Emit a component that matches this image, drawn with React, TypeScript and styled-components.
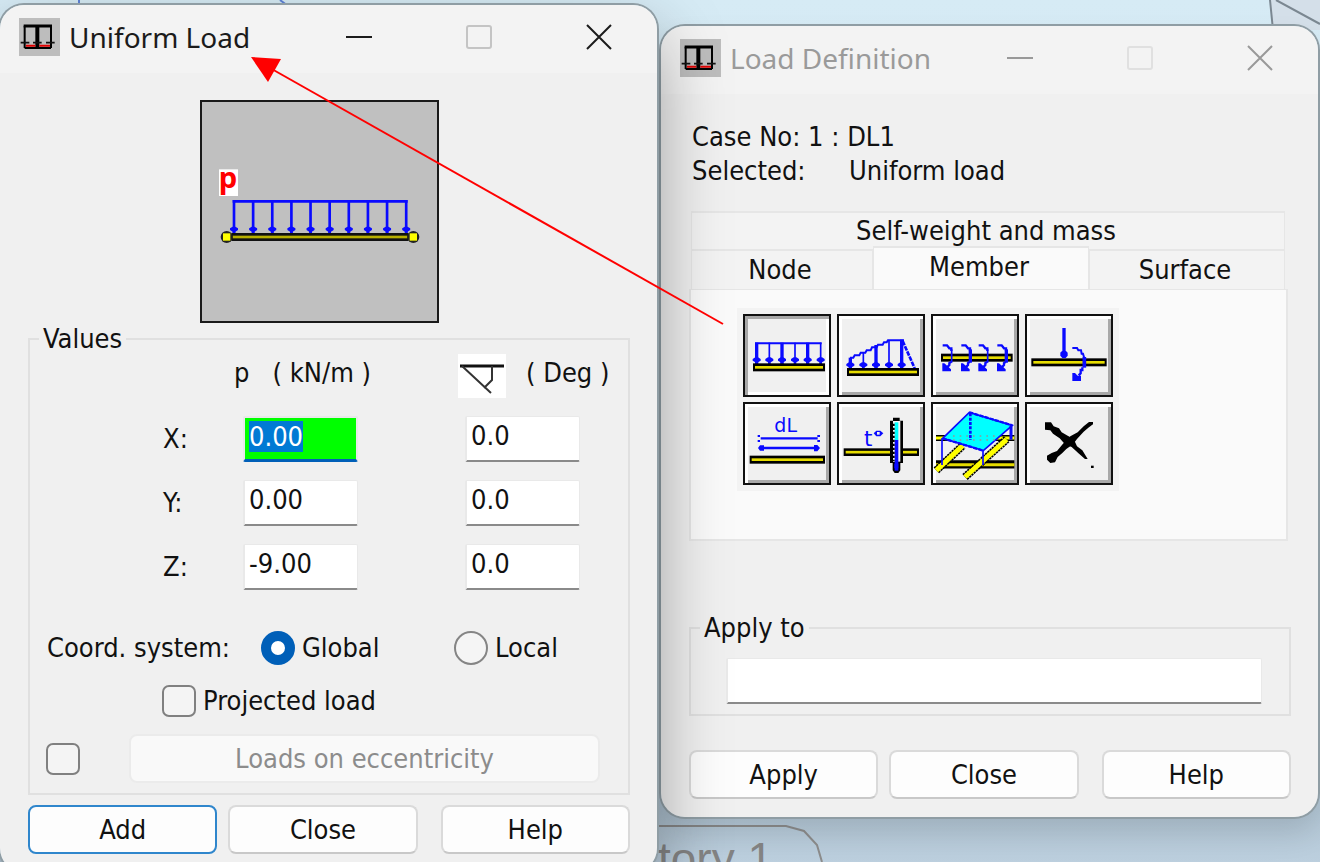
import React, { useEffect, useRef, useState } from "react";
import styled, { createGlobalStyle } from "styled-components";

const GlobalStyle = createGlobalStyle`
  *, *::before, *::after { box-sizing: border-box; }
  body {
    margin: 0;
    color: #111;
    font-family: "DejaVu Sans Condensed", "Noto Sans", sans-serif;
    font-size: 27px;
    line-height: 30px;
  }
  button, input { font: inherit; color: inherit; margin: 0; }
`;

const Desktop = styled.main`
  position: relative;
  display: grid;
  grid-template-columns: minmax(0, 1fr) minmax(0, 1fr);
  align-items: start;
  gap: 4px;
  height: 100vh;
  padding: 5px 2px 0 0;
  overflow: hidden;
  background: linear-gradient(#d6ebf5 0, #d3e6f0 30%, #b3c7d6 94%, #bccfde 100%);
`;

const Layer = styled.svg<{ $front?: boolean }>`
  position: absolute;
  inset: 0;
  width: 100%;
  height: 100%;
  z-index: ${(p) => (p.$front ? 3 : 0)};
  pointer-events: none;
`;

const Dialog = styled.section<{ $active?: boolean }>`
  position: relative;
  z-index: ${(p) => (p.$active ? 2 : 1)};
  margin-top: ${(p) => (p.$active ? 0 : 21)}px;
  border-radius: 24px;
  background: linear-gradient(#f3f3f3 68px, #f0f0f0 68px);
  box-shadow: 0 0 0 2px #8f9da4,
    ${(p) =>
      p.$active ? "0 30px 70px rgba(0, 0, 0, 0.36)" : "0 16px 30px rgba(0, 0, 0, 0.12)"};
`;

const TitleBar = styled.header`
  display: flex;
  align-items: center;
  height: 68px;
  padding: 0 35px 4px 19px;
`;

const Title = styled.h1<{ $active?: boolean }>`
  flex: 1;
  margin: 0 0 0 9px;
  font: 400 28px/38px "Noto Sans", sans-serif;
  white-space: nowrap;
  color: ${(p) => (p.$active ? "#1b1b1b" : "#9a9a9a")};
`;

const WindowButtons = styled.div<{ $active?: boolean }>`
  display: flex;
  gap: 74px;
  color: ${(p) => (p.$active ? "#1b1b1b" : "#999")};
`;

const WindowButton = styled.button`
  display: flex;
  align-items: center;
  justify-content: center;
  width: 46px;
  height: 46px;
  padding: 0;
  border: 0;
  background: none;
`;

const Body = styled.div`
  padding: 0 27px 18px 28px;
`;

const Preview = styled.div`
  display: flex;
  justify-content: center;
  padding: 27px 20px 0 0;
  margin-bottom: 1px;
`;

const PreviewPicture = styled.svg`
  display: block;
  width: 239px;
  height: 223px;
  border: 2px solid #1a1a1a;
  background: #c0c0c0;
`;

const Group = styled.fieldset`
  min-width: 0;
  margin: 0;
  padding: 0 0 10px;
  border: 2px solid #e0e0e0;
`;

const Legend = styled.legend`
  margin-left: 9px;
  padding: 0 4px;
`;

const HeaderRow = styled.div`
  display: grid;
  grid-template-columns: 204fr 224fr 68fr 102fr;
  align-items: start;
  height: 44px;
  line-height: 38px;
  white-space: pre;
`;

const ValueRow = styled.div`
  display: grid;
  grid-template-columns: 133fr 80fr 222fr 163fr;
  align-items: center;
  margin-top: 18px;
`;

const Field = styled.input<{ $hot?: boolean; $wide?: boolean }>`
  width: ${(p) => (p.$wide ? "100%" : "115px")};
  height: 46px;
  padding: ${(p) => (p.$hot ? "0 4px 5px" : "0 4px 6px")};
  border: solid #e9e9e9;
  border-width: ${(p) => (p.$hot ? "2px 2px 3px" : "1px 1px 2px 2px")};
  border-bottom-color: ${(p) => (p.$hot ? "#005fb8" : "#8a8a8a")};
  border-radius: 2px;
  outline: 0;
  background: ${(p) => (p.$hot ? "#00ff00" : "#fff")};
  &::selection {
    background: rgba(0, 120, 215, 0.99);
    color: #fff;
  }
`;

const SystemRow = styled.div`
  display: grid;
  grid-template-columns: 214fr 193fr 174fr;
  align-items: center;
  margin-top: 41px;
  padding-left: 17px;
`;

const Choice = styled.label`
  display: flex;
  align-items: center;
  gap: 7px;
  white-space: nowrap;
`;

const Radio = styled.input.attrs({ type: "radio" })`
  appearance: none;
  width: 34px;
  height: 34px;
  border: 2px solid #858585;
  border-radius: 50%;
  background: #f5f5f5;
  &:checked {
    border: 10px solid #005fb8;
    background: #fff;
  }
`;

const Check = styled.input.attrs({ type: "checkbox" })`
  appearance: none;
  flex: none;
  width: 34px;
  height: 32px;
  border: 2px solid #808080;
  border-radius: 7px;
  background: #f4f4f4;
  &:checked {
    background: #005fb8;
  }
`;

const ProjectedRow = styled.div`
  display: flex;
  margin-top: 20px;
  padding-left: 132px;
`;

const EccentricRow = styled.div`
  display: flex;
  align-items: center;
  gap: 49px;
  margin-top: 17px;
  padding: 0 28px 0 16px;
`;

const PushButton = styled.button<{ $primary?: boolean }>`
  flex: 1;
  height: 49px;
  padding: 0;
  border: ${(p) => (p.$primary ? "2px solid #2f86cc" : "2px solid #dadada")};
  border-bottom-color: ${(p) => (p.$primary ? "#2f86cc" : "#c8c8c8")};
  border-radius: 8px;
  background: #fdfdfd;
  white-space: nowrap;
  &:disabled {
    border-color: #ebebeb;
    background: #f9f9f9;
    color: #8c8c8c;
  }
`;

const ButtonRow = styled.footer<{ $spaced?: boolean }>`
  display: flex;
  gap: 11px;
  margin-top: ${(p) => (p.$spaced ? 34 : 10)}px;
  & > :last-child {
    margin-left: 12px;
  }
`;

const CaseInfo = styled.dl`
  display: grid;
  grid-template-columns: 157px 1fr;
  margin: 0;
  padding: 26px 0 23px 3px;
  line-height: 34px;
  dt, dd { margin: 0; white-space: nowrap; }
`;

const CaseLine = styled.dt`
  grid-column: 1 / -1;
`;

const Tabs = styled.div`
  display: grid;
  grid-template-columns: 181fr 215fr 195fr;
  margin: 0 6px 0 2px;
`;

const Tab = styled.button<{ $kind?: "wide" | "on" }>`
  grid-column: ${(p) => (p.$kind === "wide" ? "1 / -1" : "auto")};
  height: ${(p) => (p.$kind === "wide" ? 38 : p.$kind === "on" ? 43 : 40)}px;
  margin-top: ${(p) => (p.$kind === "on" ? -3 : 0)}px;
  padding: ${(p) => (p.$kind === "on" ? "0 4px 3px 0" : "0 4px 0 0")};
  border: solid #e6e6e6;
  border-width: 2px 1px 0;
  background: ${(p) => (p.$kind === "on" ? "#fafafa" : "#f3f3f3")};
`;

const TabPanel = styled.div`
  height: 252px;
  margin-right: 3px;
  padding: 18px 0 0 46px;
  border: 2px solid #e6e6e6;
  border-top-width: 1px;
  background: #fafafa;
`;

const ToolGrid = styled.div`
  display: grid;
  grid-template-columns: repeat(4, 88px);
  gap: 5px 6px;
  width: max-content;
  padding: 6px;
  background: #f3f3f3;
`;

const Tool = styled.button<{ $pressed?: boolean }>`
  height: 83px;
  padding: 0;
  border: 2px solid #111;
  background: #f0f0f0;
  box-shadow: ${(p) =>
    p.$pressed
      ? "inset 3px 3px 0 #a8a8a8, inset -3px -3px 0 #fff"
      : "inset 3px 3px 0 #fff, inset -3px -3px 0 #a8a8a8"};
  svg { display: block; width: 84px; height: 79px; }
`;

const Spacer = styled.div`
  height: 72px;
`;

const ApplyArea = styled.div`
  padding: 15px 27px 0 35px;
`;

const BLUE = "#0a0aff";
const YELLOW = "#e6dc00";

function AppIcon() {
  return (
    <svg width="41" height="38" viewBox="57 52 123 114" aria-hidden="true">
      <rect x="57" y="52" width="123" height="114" fill="#bdbdbd" />
      <path d="M74 75v67M153 75v67M74 142h79" stroke="#000" strokeWidth="6" fill="none" />
      <path d="M71 76h85" stroke="#000" strokeWidth="9" />
      <path d="M112 75v67" stroke="#000" strokeWidth="12" />
      <path d="M78 135h28M118 135h32" stroke="#e00000" strokeWidth="6" />
      <path d="M62 126h26M99 126h26M138 126h26" stroke="#111" strokeWidth="5" />
    </svg>
  );
}

function TitleStrip({ text, active }: { text: string; active?: boolean }) {
  return (
    <TitleBar>
      <AppIcon />
      <Title $active={active}>{text}</Title>
      <WindowButtons $active={active}>
        <WindowButton aria-label="Minimize">
          <svg width="28" height="28"><path d="M1 14h26" stroke="currentColor" strokeWidth="2" /></svg>
        </WindowButton>
        <WindowButton aria-label="Maximize" disabled>
          <svg width="28" height="28">
            <rect x="2" y="3" width="24" height="22" rx="2" fill="none" stroke={active ? "#c4c4c4" : "#e0e0e0"} strokeWidth="2" />
          </svg>
        </WindowButton>
        <WindowButton aria-label="Close">
          <svg width="28" height="28"><path d="M2 2l24 24M26 2L2 26" stroke="currentColor" strokeWidth="2" /></svg>
        </WindowButton>
      </WindowButtons>
    </TitleBar>
  );
}

function Beam({ x, y, w, h = 24 }: { x: number; y: number; w: number; h?: number }) {
  return (
    <g>
      <rect x={x} y={y} width={w} height={h} fill="#000" />
      <rect x={x + 6} y={y + h / 2 - 4} width={w - 12} height="8" fill={YELLOW} />
    </g>
  );
}

function ArrowTip({ x, y }: { x: number; y: number }) {
  return <path d={`M${x - 12} ${y - 3}l8-5h8l8 5v5l-8 5v6h-8v-6l-8-5z`} fill={BLUE} />;
}

function UniformPreview() {
  return (
    <PreviewPicture viewBox="36 36 705 657" role="img" aria-label="Uniform load on a member">
      <rect x="87" y="238" width="57" height="80" fill="#fff" />
      <text x="86" y="294" fontFamily="Noto Sans" fontWeight="700" fontSize="88" fill="#f00">p</text>
      <path d="M128 334H653" stroke={BLUE} strokeWidth="8" />
      {Array.from({ length: 10 }, (_, i) => {
        const x = 132 + i * 57.4;
        return (
          <g key={i}>
            <path d={`M${x} 330V432`} stroke={BLUE} strokeWidth="8" />
            <ArrowTip x={x} y={418} />
          </g>
        );
      })}
      <rect x="124" y="429" width="532" height="24" fill="#111" />
      <rect x="128" y="437" width="524" height="8" fill="#b8b000" />
      {[110, 670].map((x) => (
        <g key={x}>
          <circle cx={x} cy="441" r="18" fill="#222" />
          <rect x={x - 11} y="430" width="22" height="22" fill="#ff0" />
        </g>
      ))}
    </PreviewPicture>
  );
}

function Curl({ x, bold }: { x: number; bold?: boolean }) {
  return (
    <g>
      <path d={`M${x} 121h13l7 9h6v8`} fill="none" stroke={BLUE} strokeWidth="7" />
      <path d={`M${x + 27} 133v40`} fill="none" stroke={BLUE} strokeWidth={bold ? 10 : 5} />
      <path d={`M${x + 26} 170l-6 4v6l-10 10`} fill="none" stroke={BLUE} strokeWidth="7" />
      <path d={`M${x - 1} 175h6l20 18v6h-26z`} fill={BLUE} />
    </g>
  );
}

const tools: { name: string; box: string; art: React.ReactNode }[] = [
  {
    name: "Uniform load",
    box: "30 33 252 237",
    art: (
      <>
        <path d="M60 115H260" stroke={BLUE} strokeWidth="6" />
        {[65, 103, 141, 180, 218, 257].map((x, i) => (
          <g key={x}>
            <path d={`M${x} 113V177`} stroke={BLUE} strokeWidth={i % 2 ? 5 : 10} />
            <ArrowTip x={x} y={165} />
          </g>
        ))}
        <Beam x={54} y={175} w={216} />
      </>
    ),
  },
  {
    name: "Trapezoidal load",
    box: "312 33 252 237",
    art: (
      <>
        <path d="M345 158h10l4-7h14l4-8h14l4-7h12l4-9h14l4-8h14l4-7h8l4-6h48" fill="none" stroke={BLUE} strokeWidth="6" />
        <path d="M503 108l36 82" fill="none" stroke={BLUE} strokeWidth="8" strokeDasharray="14 3" />
        {[
          [346, 158], [385, 143], [423, 120], [462, 106], [500, 104],
        ].map(([x, y], i) => (
          <g key={x}>
            <path d={`M${x} ${y}V192`} stroke={BLUE} strokeWidth={i % 2 ? 5 : 10} />
            <ArrowTip x={x} y={180} />
          </g>
        ))}
        <Beam x={336} y={189} w={216} />
      </>
    ),
  },
  {
    name: "Uniform moment",
    box: "24 33 252 237",
    art: (
      <>
        <Beam x={48} y={146} w={215} />
        <Curl x={53} /><Curl x={109} bold /><Curl x={161} /><Curl x={217} bold />
      </>
    ),
  },
  {
    name: "Member force",
    box: "306 33 252 237",
    art: (
      <>
        <path d="M417 69V150" stroke={BLUE} strokeWidth="10" />
        <path d="M406 143l5-5h12l5 5v9l-6 7h-10l-6-7z" fill={BLUE} />
        <Beam x={319} y={160} w={226} />
        <path d="M442 129h14l4 7h8l2 10h4l4 14" fill="none" stroke={BLUE} strokeWidth="6" />
        <path d="M478 156v32" stroke={BLUE} strokeWidth="11" />
        <path d="M472 187v8h-5v10l-6 6" fill="none" stroke={BLUE} strokeWidth="7" />
        <path d="M442 204h8l8 8h10v16h-26z" fill={BLUE} />
      </>
    ),
  },
  {
    name: "Dilatation",
    box: "30 297 252 237",
    art: (
      <>
        <text x="118" y="381" fontFamily="DejaVu Sans" fontSize="57" fill={BLUE}>dL</text>
        <path d="M77 400H248M77 429H248" stroke={BLUE} strokeWidth="7" />
        <path d="M68 393h7M68 408h7M247 393h8M247 408h8" stroke={BLUE} strokeWidth="6" />
        <path d="M69 429l6-8h12v16H75zM255 429l-8-9h-10v19h10z" fill={BLUE} />
        <Beam x={44} y={452} w={226} />
      </>
    ),
  },
  {
    name: "Temperature",
    box: "312 297 252 237",
    art: (
      <>
        <text x="387" y="424" fontFamily="DejaVu Sans" fontSize="64" fill={BLUE}>t</text>
        <path d="M416 385l8-8h12l9 8-9 9h-12z" fill={BLUE} />
        <rect x="426" y="381" width="8" height="8" fill="#f0f0f0" />
        <Beam x={326} y={430} w={226} h={23} />
        <path d="M474 338h20v9h10v127h-8v22l-6 8h-11l-6-8v-22h-8V347h9z" fill="#000" />
        <path d="M474 348h22v122h-22z" fill="#f4f4f4" />
        <path d="M479 352h11v54h-11z" fill="#0ff" />
        <path d="M479 405h11v92h-11z" fill={BLUE} />
        <path d="M475 356v112" stroke="#000" strokeWidth="8" strokeDasharray="7 5" />
        <path d="M484 476v14" stroke={BLUE} strokeWidth="12" />
      </>
    ),
  },
  {
    name: "Surface load",
    box: "24 297 252 237",
    art: (
      <>
        <path d="M33 399H268" stroke="#000" strokeWidth="18" />
        <path d="M33 399H268" stroke="#ff0" strokeWidth="9" />
        <path d="M33 478H268" stroke="#000" strokeWidth="25" />
        <path d="M33 479H268" stroke={YELLOW} strokeWidth="9" />
        <path d="M34 496L113 422M120 516L245 403" stroke="#000" strokeWidth="24" strokeDasharray="7 2" />
        <path d="M34 496L113 422M120 516L245 403" stroke="#ff0" strokeWidth="15" />
        <path d="M53 400L133 322 262 361 175 437z" fill="#0ff" stroke={BLUE} strokeWidth="5" />
        <path d="M53 400L175 437" stroke={BLUE} strokeWidth="7" strokeDasharray="12 4" />
        <path d="M133 322L262 361" stroke={BLUE} strokeWidth="7" strokeDasharray="12 4" />
        <path d="M84 393H214M84 405H214" stroke="#8b9c9c" strokeWidth="4" strokeDasharray="5 15" />
        <path d="M136 325V405" stroke={BLUE} strokeWidth="8" strokeDasharray="9 4" />
        <path d="M51 400V480M174 436V480" stroke={BLUE} strokeWidth="5" />
        <path d="M258 362V404" stroke={BLUE} strokeWidth="9" />
      </>
    ),
  },
  {
    name: "Delete",
    box: "306 297 252 237",
    art: (
      <g fill="#000">
        <path d="M360 352h18l8 12 16 6 8 12 18 10 18 10 10 22 16 12 16 26h-8l-18-16-22-20-20-8-16-18-20-14-8-10-16-2z" />
        <path d="M504 351v7l-14 10-14 12-20 22-12 16-20 14-12 12-14 12-8 16-14 2-10-10v-12l14-8 16-6 18-22 22-22 22-12 18-18 16-13z" />
        <rect x="498" y="482" width="8" height="7" />
      </g>
    ),
  },
];

export default function App() {
  const firstField = useRef<HTMLInputElement>(null);
  const [system, setSystem] = useState("Global");

  useEffect(() => {
    firstField.current?.focus();
    firstField.current?.select();
  }, []);

  return (
    <>
      <GlobalStyle />
      <Desktop>
        <Layer aria-hidden="true">
          <path d="M79 0v6M280 0l8 6" stroke="#5f83d8" strokeWidth="2" fill="none" />
          <path d="M1270 0h50v30h-47z" fill="#d4dfe9" />
          <path d="M1270 0l3 30M1276 0l44 24" stroke="#7b8791" strokeWidth="2" fill="none" />
          <path d="M640 826H786l18 5 13 14 5 17" stroke="#8c8c8c" strokeWidth="2" fill="none" />
          <text x="658" y="875" fontFamily="Liberation Sans" fontSize="46" fill="#858585">tory 1</text>
        </Layer>

        <Dialog $active aria-label="Uniform Load">
          <TitleStrip text="Uniform Load" active />
          <Body>
            <Preview><UniformPreview /></Preview>
            <Group>
              <Legend>Values</Legend>
              <HeaderRow>
                <span />
                <span>{"p   ( kN/m )"}</span>
                <svg width="48" height="44" aria-label="Angle">
                  <rect width="48" height="44" fill="#fff" />
                  <path d="M2 12H46" stroke="#111" strokeWidth="3" />
                  <path d="M4 12L33 39M34 12V26L26 34" stroke="#333" strokeWidth="2" fill="none" />
                </svg>
                <span>( Deg )</span>
              </HeaderRow>
              {[["X", "0.00"], ["Y", "0.00"], ["Z", "-9.00"]].map(([axis, value], i) => (
                <ValueRow key={axis}>
                  <span />
                  <label htmlFor={`load-${axis}`}>{axis}:</label>
                  <Field id={`load-${axis}`} ref={i === 0 ? firstField : undefined} $hot={i === 0} defaultValue={value} />
                  <Field aria-label={`${axis} angle`} defaultValue="0.0" />
                </ValueRow>
              ))}
              <SystemRow role="radiogroup" aria-labelledby="system">
                <span id="system">Coord. system:</span>
                {["Global", "Local"].map((name) => (
                  <Choice key={name}>
                    <Radio name="system" checked={system === name} onChange={() => setSystem(name)} />
                    {name}
                  </Choice>
                ))}
              </SystemRow>
              <ProjectedRow>
                <Choice><Check />Projected load</Choice>
              </ProjectedRow>
              <EccentricRow>
                <Check aria-label="Use loads on eccentricity" />
                <PushButton disabled>Loads on eccentricity</PushButton>
              </EccentricRow>
            </Group>
            <ButtonRow>
              <PushButton $primary>Add</PushButton>
              <PushButton>Close</PushButton>
              <PushButton>Help</PushButton>
            </ButtonRow>
          </Body>
        </Dialog>

        <Dialog aria-label="Load Definition">
          <TitleStrip text="Load Definition" />
          <Body>
            <CaseInfo>
              <CaseLine>Case No: 1 : DL1</CaseLine>
              <dt>Selected:</dt>
              <dd>Uniform load</dd>
            </CaseInfo>
            <Tabs role="tablist">
              <Tab role="tab" $kind="wide">Self-weight and mass</Tab>
              <Tab role="tab">Node</Tab>
              <Tab role="tab" $kind="on" aria-selected="true">Member</Tab>
              <Tab role="tab">Surface</Tab>
            </Tabs>
            <TabPanel role="tabpanel">
              <ToolGrid>
                {tools.map((t, i) => (
                  <Tool key={t.name} $pressed={i === 0} aria-label={t.name}>
                    <svg viewBox={t.box}>{t.art}</svg>
                  </Tool>
                ))}
              </ToolGrid>
            </TabPanel>
            <Spacer />
            <Group>
              <Legend>Apply to</Legend>
              <ApplyArea><Field $wide aria-label="Apply to" /></ApplyArea>
            </Group>
            <ButtonRow $spaced>
              <PushButton>Apply</PushButton>
              <PushButton>Close</PushButton>
              <PushButton>Help</PushButton>
            </ButtonRow>
          </Body>
        </Dialog>

        <Layer $front aria-hidden="true">
          <path d="M723 324L270 68" stroke="#f00" strokeWidth="2" />
          <path d="M251 57l30 2-13 23z" fill="#f00" />
        </Layer>
      </Desktop>
    </>
  );
}
